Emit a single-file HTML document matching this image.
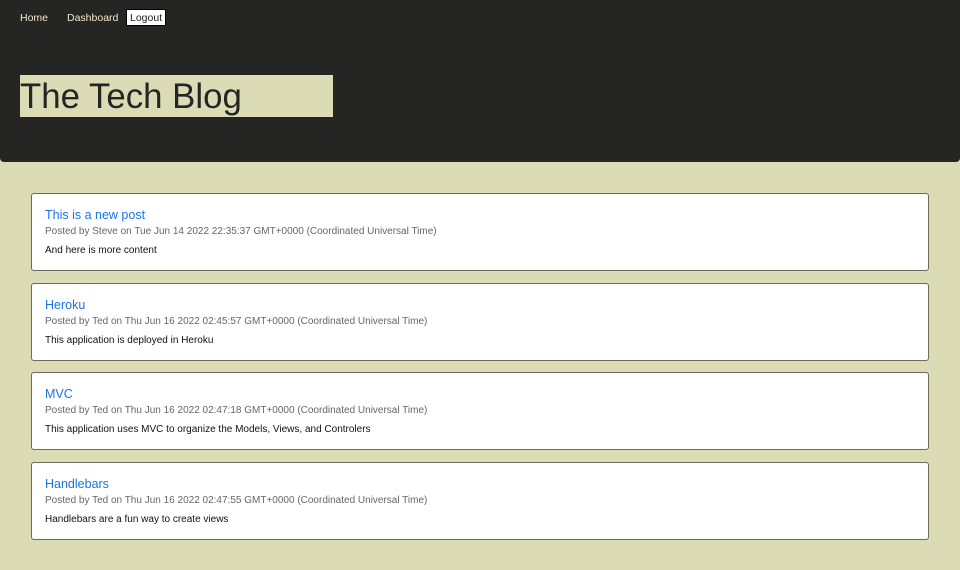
<!DOCTYPE html>
<html><head><meta charset="utf-8"><style>
*{box-sizing:border-box;margin:0;padding:0}
body{width:960px;height:570px;background:#dbdcb5;font-family:"Liberation Sans",Arial,sans-serif;overflow:hidden;position:relative}
header{position:absolute;left:0;top:0;width:960px;height:162px;background:#252523;border-radius:0 0 4px 4px}
.nav a{position:absolute;top:9px;height:17px;font-size:10.5px;line-height:17px;color:#f2e8c8;text-decoration:none}
.logout{background:#fff;color:#222!important;border:1px solid #000;padding:0 3px}
.title{position:absolute;left:20px;top:75px;width:313px;height:42px;background:#dbdcb5;font-size:34.8px;line-height:43px;color:#252523}
.card{position:absolute;left:31px;width:898px;height:78px;background:#fff;border:1px solid #6b6b5a;border-radius:3px;padding:0 13px}
.card h2{font-weight:normal;font-size:12.5px;color:#1a73e8;position:absolute;top:14px;left:13px}
.card .m{font-size:10px;color:#666;position:absolute;top:32px;left:13px}
.card .c{font-size:10px;color:#111;position:absolute;top:51px;left:13px}
</style></head><body>
<header>
<div class="nav"><a style="left:20px;top:10px">Home</a><a style="left:67px;top:10px">Dashboard</a><a class="logout" style="left:126px">Logout</a></div>
<div class="title">The Tech Blog</div>
</header>
<div class="card" style="top:193px"><h2>This is a new post</h2><div class="m">Posted by Steve on Tue Jun 14 2022 22:35:37 GMT+0000 (Coordinated Universal Time)</div><div class="c">And here is more content</div></div>
<div class="card" style="top:283px"><h2>Heroku</h2><div class="m">Posted by Ted on Thu Jun 16 2022 02:45:57 GMT+0000 (Coordinated Universal Time)</div><div class="c">This application is deployed in Heroku</div></div>
<div class="card" style="top:372px"><h2>MVC</h2><div class="m">Posted by Ted on Thu Jun 16 2022 02:47:18 GMT+0000 (Coordinated Universal Time)</div><div class="c">This application uses MVC to organize the Models, Views, and Controlers</div></div>
<div class="card" style="top:462px"><h2>Handlebars</h2><div class="m">Posted by Ted on Thu Jun 16 2022 02:47:55 GMT+0000 (Coordinated Universal Time)</div><div class="c">Handlebars are a fun way to create views</div></div>
</body></html>
